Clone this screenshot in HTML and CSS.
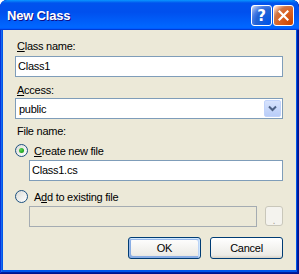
FILE: index.html
```html
<!DOCTYPE html>
<html lang="en">
<head>
    <meta charset="UTF-8">
    <title>New Class</title>
    <link rel="stylesheet" href="styles.css">
</head>
<body>
    <div class="window">
        <div class="title-bar">
            <span class="title">New Class</span>
            <div class="title-buttons">
                <button class="tb-btn help">?</button>
                <button class="tb-btn close">
                    <svg width="11" height="11" viewBox="0 0 11 11"><path d="M1.5 1.5 L9.5 9.5 M9.5 1.5 L1.5 9.5" stroke="#fff" stroke-width="2.2" stroke-linecap="square"/></svg>
                </button>
            </div>
        </div>

        <div class="client">
            <label class="label"><u>C</u>lass name:</label>
            <div class="textbox first">Class1</div>

            <label class="label"><u>A</u>ccess:</label>
            <div class="combo">
                <span class="combo-value">public</span>
                <span class="combo-arrow">
                    <svg width="9" height="7" viewBox="0 0 9 7"><path d="M1 1.5 L4.5 5 L8 1.5" fill="none" stroke="#4d6185" stroke-width="2"/></svg>
                </span>
            </div>

            <label class="label file-label">File name:</label>
            <div class="radio-row">
                <span class="radio checked"></span>
                <span class="radio-text"><u>C</u>reate new file</span>
            </div>
            <div class="textbox indent">Class1.cs</div>

            <div class="radio-row second">
                <span class="radio"></span>
                <span class="radio-text">A<u>d</u>d to existing file</span>
            </div>
            <div class="browse-row">
                <div class="textbox disabled"></div>
                <button class="browse" disabled>.</button>
            </div>

            <div class="actions">
                <button class="btn default">OK</button>
                <button class="btn">Cancel</button>
            </div>
        </div>
    </div>
</body>
</html>
```

FILE: styles.css
```css
* {
    margin: 0;
    padding: 0;
    box-sizing: border-box;
}

body {
    width: 299px;
    height: 274px;
    background: #ffffff;
    font-family: "Liberation Sans", Arial, sans-serif;
    font-size: 11px;
    letter-spacing: -0.25px;
    color: #000000;
}

.window {
    width: 299px;
    height: 274px;
    display: flex;
    flex-direction: column;
    background: #0055ea;
    border-radius: 7px 7px 0 0;
    box-shadow: inset -1px -1px #00138c, inset 1px 1px #0831d9, inset -2px -2px #001ea0, inset 2px 2px #166aee;
    overflow: hidden;
}

.title-bar {
    height: 30px;
    flex-shrink: 0;
    display: flex;
    align-items: center;
    justify-content: space-between;
    padding: 0 5px 0 7px;
    background: linear-gradient(180deg, #0997ff, #0053ee 10%, #0050ee 40%, #0066ff 88%, #0066ff 93%, #005bff 95%, #003dd7 97%, #003dd7);
    border-radius: 7px 7px 0 0;
}

.title {
    color: #ffffff;
    font-weight: bold;
    font-size: 13px;
    letter-spacing: -0.2px;
    text-shadow: 1px 1px #0f1089;
    padding-top: 1px;
}

.title-buttons {
    display: flex;
    gap: 1px;
    padding-top: 1px;
}

.tb-btn {
    width: 21px;
    height: 21px;
    border: 1px solid #ffffff;
    border-radius: 3px;
    display: flex;
    align-items: center;
    justify-content: center;
    color: #ffffff;
    font-family: "DejaVu Sans", sans-serif;
    font-weight: bold;
    font-size: 15px;
    letter-spacing: 0;
}

.help {
    background: radial-gradient(circle at 90% 90%, #0054e9 0, #2263d5 55%, #4479e4 70%, #a3bbec 90%, #ffffff 100%);
}

.close {
    background: radial-gradient(circle at 90% 90%, #cc4600 0, #dc6527 55%, #cd7546 70%, #ffccb2 90%, #ffffff 100%);
}

.client {
    flex: 1;
    margin: 0 3px 4px 3px;
    background: #ece9d8;
    padding: 10px 13px 0 12px;
    display: flex;
    flex-direction: column;
}

.label {
    display: block;
    height: 13px;
    line-height: 13px;
    padding-left: 2px;
    margin-bottom: 3px;
}

.textbox {
    height: 21px;
    line-height: 19px;
    background: #ffffff;
    border: 1px solid #7f9db9;
    padding-left: 2px;
    margin-bottom: 7px;
}

.combo {
    height: 21px;
    display: flex;
    align-items: center;
    justify-content: space-between;
    background: #ffffff;
    border: 1px solid #7f9db9;
    padding: 1px;
    margin-top: -2px;
    margin-bottom: 6px;
}

.combo-value {
    padding-left: 2px;
}

.combo-arrow {
    width: 17px;
    height: 17px;
    display: flex;
    align-items: center;
    justify-content: center;
    background: linear-gradient(180deg, #d7e3fd, #b9cdf8);
    border: 1px solid #c1d3fb;
    border-radius: 2px;
}

.file-label {
    margin-bottom: 5px;
}

.radio-row {
    height: 15px;
    display: flex;
    align-items: center;
    gap: 6px;
    margin-bottom: 2px;
}

.radio-row.second {
    margin-top: 0;
}

.radio {
    position: relative;
    width: 13px;
    height: 13px;
    border-radius: 50%;
    border: 1px solid #1c5180;
    background: linear-gradient(135deg, #dcdcd7, #ffffff);
    flex-shrink: 0;
}

.radio.checked::after {
    content: "";
    position: absolute;
    left: 3px;
    top: 3px;
    width: 5px;
    height: 5px;
    border-radius: 50%;
    background: radial-gradient(circle at 35% 35%, #55d851, #21a121 70%, #1a7f1a);
}

.textbox.indent {
    margin-left: 14px;
    margin-bottom: 8px;
}

.browse-row {
    display: flex;
    align-items: flex-start;
    margin-left: 14px;
    gap: 8px;
}

.textbox.disabled {
    flex: 1;
    background: #ece9d8;
    border-color: #a5acb2;
    margin-bottom: 0;
}

.browse {
    width: 18px;
    height: 20px;
    background: #f4f3ee;
    border: 1px solid #c9c7ba;
    border-radius: 3px;
    color: #aca899;
    font-family: "Liberation Sans", sans-serif;
    font-size: 11px;
    line-height: 20px;
    padding-top: 3px;
}

.actions {
    display: flex;
    justify-content: flex-end;
    gap: 9px;
    margin-top: 10px;
}

.btn {
    width: 73px;
    height: 22px;
    font-family: "Liberation Sans", Arial, sans-serif;
    font-size: 11px;
    letter-spacing: -0.25px;
    color: #000000;
    background: linear-gradient(180deg, #ffffff, #ecebe6 86%, #d6d0c5);
    border: 1px solid #003c74;
    border-radius: 3px;
}

.btn.default {
    box-shadow: inset -1px 1px #cee7ff, inset 1px 2px #98b8ea, inset -2px 2px #bcd4f6, inset 1px -1px #89ade4, inset 2px -2px #89ade4;
}
```
